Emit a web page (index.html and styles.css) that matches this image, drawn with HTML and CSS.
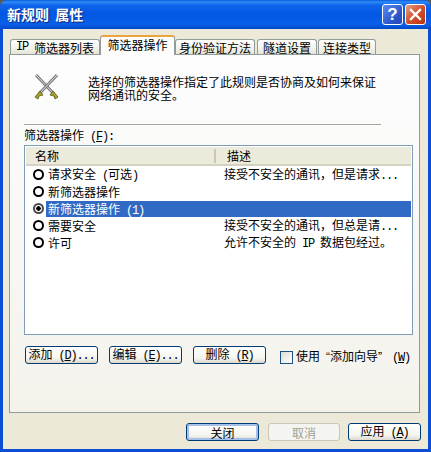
FILE: index.html
```html
<!DOCTYPE html>
<html lang="zh">
<head>
  <meta charset="UTF-8" />
  <title>新规则 属性</title>
  <link rel="stylesheet" href="styles.css">
</head>
<body>
  <div class="window">
    <div class="titlebar">
      <span class="title">新规则&nbsp;&nbsp;属性</span>
      <div class="caption-buttons">
        <button class="caption help">?</button>
        <button class="caption close">
          <svg width="13" height="13" viewBox="0 0 13 13"><path d="M2 2 L11 11 M11 2 L2 11" stroke="#fff" stroke-width="2.4" stroke-linecap="square"/></svg>
        </button>
      </div>
    </div>

    <div class="face">
      <div class="tabs">
        <div class="tab tab-ip"><span class="lat">IP&nbsp;</span>筛选器列表</div>
        <div class="tab tab-active">筛选器操作</div>
        <div class="tab tab-auth">身份验证方法</div>
        <div class="tab tab-tunnel">隧道设置</div>
        <div class="tab tab-conn">连接类型</div>
      </div>

      <div class="panel">
        <div class="intro">
          <svg class="swords" width="30" height="30" viewBox="0 0 30 30">
            <path d="M4 2 L22 21" stroke="#77777c" stroke-width="3"/>
            <path d="M4 2 L22 21" stroke="#e4e4ea" stroke-width="1"/>
            <path d="M25 2 L7 21" stroke="#77777c" stroke-width="3"/>
            <path d="M25 2 L7 21" stroke="#e4e4ea" stroke-width="1"/>
            <path d="M3 24 L8 18 L11 22 L7 23 L6 26 Z" fill="#a7a322" stroke="#56551a" stroke-width="0.8"/>
            <path d="M26 24 L21 18 L18 22 L22 23 L23 26 Z" fill="#a7a322" stroke="#56551a" stroke-width="0.8"/>
          </svg>
          <p class="intro-text">选择的筛选器操作指定了此规则是否协商及如何来保证<br>网络通讯的安全。</p>
        </div>
        <div class="separator"></div>
        <div class="field-label">筛选器操作<span class="lat">&nbsp;(<u>F</u>):</span></div>

        <div class="list">
          <div class="list-head">
            <div class="col-name">名称</div>
            <div class="col-desc">描述</div>
          </div>
          <div class="row">
            <span class="radio"></span>
            <span class="name">请求安全<span class="lat">&nbsp;(</span>可选<span class="lat">)</span></span>
            <span class="desc">接受不安全的通讯，但是请求<span class="lat">...</span></span>
          </div>
          <div class="row">
            <span class="radio"></span>
            <span class="name">新筛选器操作</span>
            <span class="desc"></span>
          </div>
          <div class="row row-selected">
            <span class="radio radio-on"></span>
            <span class="name">新筛选器操作<span class="lat">&nbsp;(1)</span></span>
            <span class="desc"></span>
          </div>
          <div class="row">
            <span class="radio"></span>
            <span class="name">需要安全</span>
            <span class="desc">接受不安全的通讯，但总是请<span class="lat">...</span></span>
          </div>
          <div class="row">
            <span class="radio"></span>
            <span class="name">许可</span>
            <span class="desc">允许不安全的<span class="lat">&nbsp;IP&nbsp;</span>数据包经过。</span>
          </div>
        </div>

        <div class="actions">
          <button class="btn">添加<span class="lat">&nbsp;(<u>D</u>)...</span></button>
          <button class="btn">编辑<span class="lat">&nbsp;(<u>E</u>)...</span></button>
          <button class="btn">删除<span class="lat">&nbsp;(<u>R</u>)</span></button>
          <label class="wizard">
            <span class="checkbox"></span>
            <span>使用<span class="quote quote-open">“</span>添加向导<span class="quote">”</span><span class="lat wizard-key">(<u>W</u>)</span></span>
          </label>
        </div>
      </div>

      <div class="footer">
        <button class="btn btn-default">关闭</button>
        <button class="btn btn-disabled">取消</button>
        <button class="btn">应用<span class="lat">&nbsp;(<u>A</u>)</span></button>
      </div>
    </div>
  </div>
</body>
</html>
```

FILE: styles.css
```css
body {
  margin: 0;
  width: 431px;
  height: 452px;
  overflow: hidden;
  font-family: "Noto Sans CJK SC", sans-serif;
  font-size: 12px;
  line-height: 13px;
  color: #000;
  background: #5a5a50;
}
u {
  text-decoration: underline;
}
.lat {
  font-family: "Liberation Mono", monospace;
  font-size: 12px;
  letter-spacing: -1.2px;
}
.window {
  width: 431px;
  height: 452px;
  display: flex;
  flex-direction: column;
  background: #0b4ed6;
  border-radius: 7px 7px 0 0;
  overflow: hidden;
}
.titlebar {
  height: 29px;
  flex: none;
  display: flex;
  align-items: center;
  justify-content: space-between;
  padding: 0 5px 0 7px;
  background: linear-gradient(to bottom, #0a5be0 0, #2f8cf5 2px, #0f65ea 5px, #0357e3 14px, #0a5fe8 24px, #0349c9 29px);
}
.title {
  color: #fff;
  font-size: 14px;
  font-weight: bold;
  text-shadow: 1px 1px 1px #0a2a80;
}
.caption-buttons {
  display: flex;
  gap: 2px;
}
.caption {
  width: 21px;
  height: 21px;
  padding: 0;
  display: flex;
  align-items: center;
  justify-content: center;
  border: 1px solid #fff;
  border-radius: 3px;
  color: #fff;
  font-family: "Liberation Sans", sans-serif;
  font-size: 17px;
  font-weight: bold;
}
.help {
  background: linear-gradient(135deg, #5a8cf0, #2a52c8 70%, #2a48b0);
}
.close {
  background: linear-gradient(135deg, #e8a088, #d4502c 50%, #b83410);
}
.face {
  flex: 1;
  margin: 0 3px 3px;
  padding: 6px 8px 8px 6px;
  background: #ece9d8;
  display: flex;
  flex-direction: column;
}
.tabs {
  height: 19px;
  flex: none;
  display: flex;
  align-items: flex-end;
  padding-left: 1px;
  position: relative;
  z-index: 1;
}
.tab {
  height: 15px;
  box-sizing: border-box;
  border: 1px solid #919b9c;
  border-bottom: none;
  border-radius: 3px 3px 0 0;
  background: linear-gradient(to bottom, #fff, #f0efe6 70%, #e6e3d6);
  display: flex;
  align-items: center;
  justify-content: center;
  white-space: nowrap;
}
.tab-ip { width: 90px; }
.tab-auth { width: 80px; }
.tab-tunnel { width: 60px; margin-left: 2px; }
.tab-conn { width: 58px; margin-left: 1px; }
.tab-active {
  width: 75px;
  height: 20px;
  margin-bottom: -1px;
  background: #fdfdfb;
  border-top: 2px solid #e9a53c;
  padding-bottom: 3px;
}
.panel {
  flex: 1;
  display: flex;
  flex-direction: column;
  border: 1px solid #919b9c;
  padding: 0 6px 0 14px;
  background: linear-gradient(to bottom, #fdfdfe, #f3f2eb);
}
.intro {
  height: 69px;
  flex: none;
  display: flex;
  padding-top: 18px;
  box-sizing: border-box;
}
.swords {
  margin-left: 8px;
  margin-right: 26px;
  flex: none;
}
.intro-text {
  margin: 2px 0 0;
}
.separator {
  width: 357px;
  height: 1px;
  background: #a8a89c;
  flex: none;
}
.field-label {
  margin: 3px 0 4px;
  height: 13px;
}
.list {
  height: 190px;
  box-sizing: border-box;
  flex: none;
  border: 1px solid #7f9db9;
  background: #fff;
  padding: 1px;
}
.list-head {
  height: 19px;
  display: flex;
  align-items: center;
  background: #ebeadb;
  border-bottom: 2px solid #d6d2c2;
  box-sizing: border-box;
}
.col-name {
  width: 179px;
  padding-left: 9px;
  height: 14px;
  border-right: 2px solid #cbc7b8;
  line-height: 14px;
}
.col-desc {
  padding-left: 11px;
}
.row {
  height: 17px;
  display: flex;
  align-items: center;
}
.radio {
  width: 11px;
  height: 11px;
  box-sizing: border-box;
  margin-left: 7px;
  margin-right: 2px;
  flex: none;
  border: 2px solid #000;
  border-radius: 50%;
  background: #fff;
}
.radio-on {
  border-color: #4a4a4a;
  background: radial-gradient(circle, #000 0 2px, #fff 2.5px);
}
.name {
  width: 175px;
  padding-left: 2px;
  flex: none;
  white-space: nowrap;
}
.desc {
  white-space: nowrap;
  padding-left: 1px;
}
.row-selected .name {
  color: #fff;
}
.row-selected .name,
.row-selected .desc {
  align-self: flex-end;
  background: #316ac5;
  height: 16px;
  line-height: 16px;
}
.row-selected .desc {
  flex: 1;
}
.actions {
  display: flex;
  align-items: center;
  margin-top: 10px;
}
.btn {
  width: 73px;
  height: 18px;
  padding: 0;
  font: inherit;
  color: #000;
  border: 1px solid #003c74;
  border-radius: 3px;
  background: linear-gradient(to bottom, #fff, #f4f4f0 70%, #dcd8cc);
  white-space: nowrap;
}
.actions .btn {
  margin-right: 11px;
}
.actions .btn:first-child {
  margin-left: 1px;
}
.wizard {
  display: flex;
  align-items: center;
  gap: 3px;
  margin-left: 3px;
  margin-top: 4px;
  white-space: nowrap;
}
.wizard-key {
  padding-left: 4px;
}
.checkbox {
  width: 13px;
  height: 13px;
  box-sizing: border-box;
  border: 1px solid #1c5180;
  background: linear-gradient(135deg, #dcdcd7, #fff);
}
.quote {
  display: inline-block;
  width: 10px;
  font-size: 10px;
}
.quote-open {
  text-align: right;
}
.footer {
  height: 18px;
  margin-top: 10px;
  flex: none;
  display: flex;
  justify-content: flex-end;
  gap: 8px;
  margin-right: -1px;
}
.btn-default {
  margin-right: 1px;
  box-shadow: inset 0 0 0 2px #a6c0ec;
}
.btn-disabled {
  color: #a1a192;
  border-color: #c9c7ba;
  background: #f4f4f0;
  width: 72px;
}
```
